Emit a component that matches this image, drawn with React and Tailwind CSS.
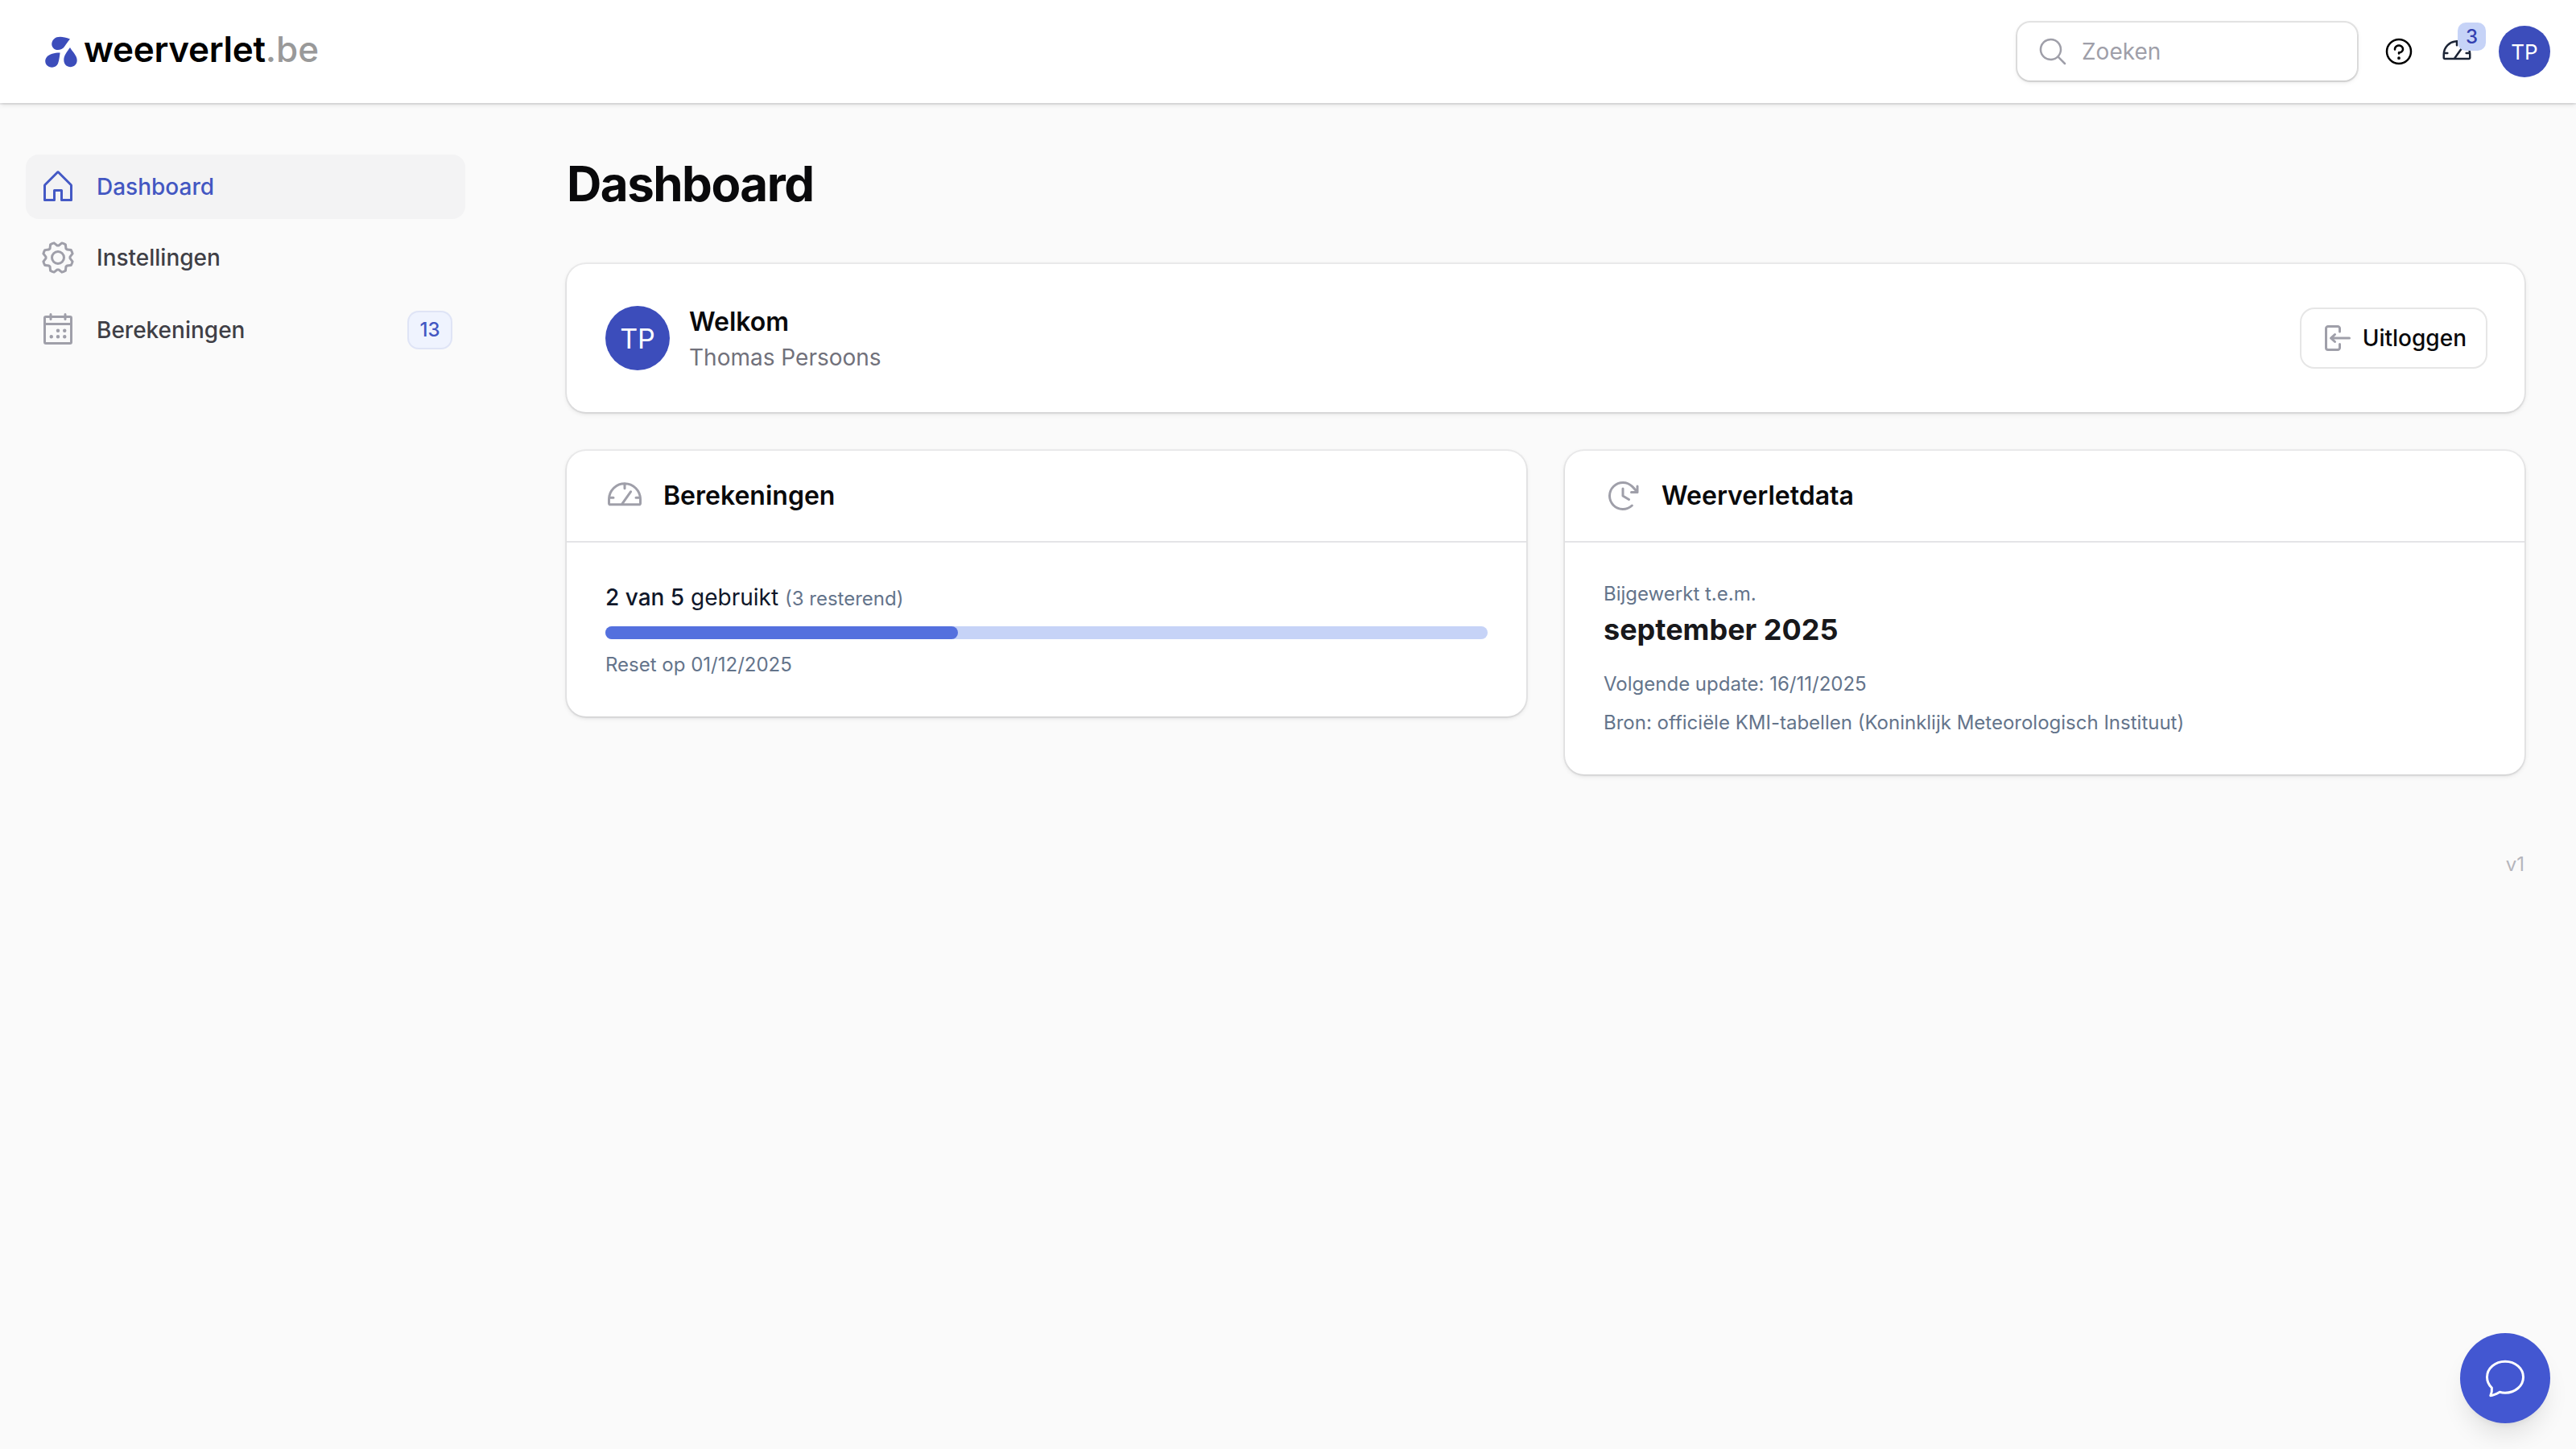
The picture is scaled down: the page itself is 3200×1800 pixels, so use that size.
import { PiHouse, PiGear, PiCalendarDots, PiMagnifyingGlass, PiClockClockwise, PiQuestion } from "react-icons/pi";

const cardShadow =
  "rounded-[24px] bg-white shadow-[0_0_0_2px_rgba(9,9,11,0.05),0_2px_6px_0_rgba(0,0,0,0.1),0_2px_4px_-2px_rgba(0,0,0,0.1)]";

function GaugeIcon({ className }) {
  return (
    <svg viewBox="0 0 48 48" className={className} fill="none" stroke="currentColor" strokeLinecap="round" strokeLinejoin="round" strokeWidth="3">
      <path d="M4.500 33.300V28.300a19.500 19.500 0 0 1 39 0v5a1.500 1.500 0 0 1-1.500 1.500H6A1.500 1.500 0 0 1 4.500 33.300ZM24 8.800v6M4.500 26.300H10M38 26.300h5.500M20.500 34.300 31.500 18.800" />
    </svg>
  );
}

function NavItem({ Icon, label, active, badge }) {
  return (
    <li>
      <a
        className={
          active
            ? "flex min-h-20 items-center gap-6 rounded-[16px] bg-[#f3f3f4] px-4 text-[#4357c2]"
            : "flex min-h-20 items-center gap-6 rounded-[16px] px-4 text-[#3f3f46]"
        }
      >
        <Icon className={active ? "size-12 shrink-0 text-[#4459c5]" : "size-12 shrink-0 text-[#9f9fa9]"} />
        <span className="flex-1 text-[28px] leading-[48px] font-medium">{label}</span>
        {badge && (
          <span className="my-5 mr-[2px] flex h-11 min-w-[52px] items-center justify-center rounded-[12px] bg-[#eff3fe] px-[12px] text-[24px] leading-8 font-medium text-[#4357c2] shadow-[0_0_0_2px_#dfe4f6]">
            {badge}
          </span>
        )}
      </a>
    </li>
  );
}

function Topbar() {
  return (
    <header className="flex h-32 items-center bg-white pr-8 pl-14 shadow-[0_0_0_2px_rgba(9,9,11,0.05),0_2px_6px_0_rgba(0,0,0,0.1),0_2px_4px_-2px_rgba(0,0,0,0.1)]">
      <div className="flex items-center">
        <svg viewBox="0 0 40 40" className="size-10 text-[#3c4dbb]" fill="currentColor">
          <path d="M31 4.500C24 1.500 18 1 14.500 2.300 8.500 4.500 6.500 11.500 10 15.500c4 4.500 11 2.500 14-1.500C26 11 28 8 31 4.500Z" />
          <path d="M18.600 21.600C12 21.500 5.500 23 2 27c-3.500 4.500-1.500 10 3 12 4.500 1.500 9 .500 11-4 1.500-4 2-9 2.600-13.400Z" />
          <path d="M31 15c-3.500 5-7.600 9.500-7.700 15.500 0 5.500 4 8.700 8.200 8.700s8.200-3.200 8.200-8.200C39.700 25 34.500 21 31 15Z" />
        </svg>
        <span className="mb-[6px] ml-[8px] text-[44px] leading-[56px] font-semibold tracking-[-0.3px] text-black">weerverlet</span>
        <span className="mb-[6px] text-[44px] leading-[56px] font-medium text-[#999]">.be</span>
      </div>
      <div className="ml-auto flex items-center">
        <div className="flex h-[72px] w-[422px] items-center rounded-[16px] bg-white pl-6 shadow-[0_0_0_2px_rgba(9,9,11,0.1),0_2px_6px_0_rgba(0,0,0,0.1),0_2px_4px_-2px_rgba(0,0,0,0.1)]">
          <PiMagnifyingGlass className="size-10 text-[#9f9fa9]" />
          <span className="ml-4 text-[28px] leading-[48px] text-[#9f9fa9]">Zoeken</span>
        </div>
        <PiQuestion className="ml-8 size-10 text-black" />
        <div className="relative ml-8 size-10">
          <GaugeIcon className="size-10 text-[#1c2536]" />
          <span className="absolute -top-4 left-[21px] flex h-[35px] w-[35px] items-center justify-center rounded-[10px] bg-[#c6d3f7] text-[24px] leading-8 font-medium text-[#343fb0]">3</span>
        </div>
        <span className="ml-8 flex size-16 items-center justify-center rounded-full bg-[#3c4dbb] text-[26px] text-white">TP</span>
      </div>
    </header>
  );
}

export default function App() {
  return (
    <div className="flex min-h-[1800px] w-[3200px] flex-col bg-[#fafafa] font-['Inter',sans-serif] text-[#09090b]">
      <Topbar />
      <div className="flex">
        <aside className="w-[640px] shrink-0 px-8 pt-16">
          <ul className="flex w-[546px] flex-col gap-2">
            <NavItem Icon={PiHouse} label="Dashboard" active />
            <NavItem Icon={PiGear} label="Instellingen" />
            <NavItem Icon={PiCalendarDots} label="Berekeningen" badge="13" />
          </ul>
        </aside>
        <main className="flex-1 pt-16 pr-16 pl-16">
          <h1 className="text-[60px] leading-[72px] font-bold tracking-[-1.5px]">Dashboard</h1>
          <section className={`${cardShadow} mt-16 flex items-center p-12`}>
            <span className="flex size-20 items-center justify-center rounded-full bg-[#3c4dbb] text-[34px] text-white">TP</span>
            <div className="ml-6 flex-1">
              <h2 className="text-[32px] leading-[48px] font-semibold">Welkom</h2>
              <p className="text-[28px] leading-10 text-[#71717b]">Thomas Persoons</p>
            </div>
            <button className="flex h-[72px] items-center gap-3 rounded-[16px] px-6 text-[28px] font-medium shadow-[0_0_0_2px_rgba(9,9,11,0.1)]">
              <svg viewBox="0 0 40 40" className="size-10 text-[#9f9fa9]" fill="none" stroke="currentColor" strokeWidth="3" strokeLinecap="round" strokeLinejoin="round">
                <path d="M23.500 12V8A2.500 2.500 0 0 0 21 5.500H9A2.500 2.500 0 0 0 6.500 8v24A2.500 2.500 0 0 0 9 34.500h12a2.500 2.500 0 0 0 2.500-2.500v-4.500M35.500 20h-23m5-4.500L12.500 20l5 4.500" />
              </svg>
              Uitloggen
            </button>
          </section>
          <div className="mt-12 grid grid-cols-2 items-start gap-12">
            <section className={cardShadow}>
              <header className="flex h-[114px] items-center gap-6 border-b-2 border-[#e4e4e7] px-12">
                <GaugeIcon className="size-12 text-[#9f9fa9]" />
                <h3 className="text-[32px] leading-[48px] font-semibold">Berekeningen</h3>
              </header>
              <div className="p-12">
                <p className="text-[28px] leading-10 text-[#0f172a]">
                  <span className="font-medium">2 van 5</span> gebruikt <span className="text-[24px] leading-none text-[#64748b]">(3 resterend)</span>
                </p>
                <div className="mt-4 h-4 rounded-full bg-[#c6d3f7]">
                  <div className="h-4 w-2/5 rounded-full bg-[#5470de]" />
                </div>
                <p className="mt-4 text-[24px] leading-8 text-[#64748b]">Reset op 01/12/2025</p>
              </div>
            </section>
            <section className={cardShadow}>
              <header className="flex h-[114px] items-center gap-6 border-b-2 border-[#e4e4e7] px-12">
                <PiClockClockwise className="size-12 text-[#9f9fa9]" />
                <h3 className="text-[32px] leading-[48px] font-semibold">Weerverletdata</h3>
              </header>
              <div className="p-12 text-[24px] leading-8 text-[#64748b]">
                <p>Bijgewerkt t.e.m.</p>
                <p className="text-[36px] leading-[56px] font-bold text-[#18181b]">september 2025</p>
                <p className="mt-6">Volgende update: 16/11/2025</p>
                <p className="mt-4">Bron: officiële KMI-tabellen (Koninklijk Meteorologisch Instituut)</p>
              </div>
            </section>
          </div>
          <p className="mt-24 text-right text-[24px] leading-8 text-[#b5b5bc]">v1</p>
        </main>
      </div>
      <button className="fixed right-8 bottom-8 flex size-28 items-center justify-center rounded-full bg-[#4357d1] text-white shadow-[0_20px_30px_-6px_rgba(0,0,0,0.1),0_8px_12px_-8px_rgba(0,0,0,0.1)]">
        <svg viewBox="0 0 56 56" className="size-14" fill="none" stroke="currentColor" strokeWidth="3" strokeLinecap="round" strokeLinejoin="round">
          <path d="M28 7.200c12.500 0 22.500 8.700 22.500 19.500S40.500 46.200 28 46.200c-2.400 0-4.700-.300-6.800-.900C17.500 47.500 14 49.500 9.800 49.700c1.500-3.200 2-6 1.600-9.700C7.800 36.500 5.500 31.800 5.500 26.700 5.500 15.900 15.500 7.200 28 7.200Z" />
        </svg>
      </button>
    </div>
  );
}
